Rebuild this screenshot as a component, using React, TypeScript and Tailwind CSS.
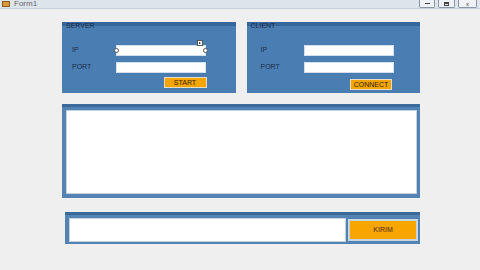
import React from "react";

const GroupBox = ({
  title,
  labelClass,
  buttonText,
  buttonClass,
  handles,
}: {
  title: string;
  labelClass: string;
  buttonText: string;
  buttonClass: string;
  handles?: boolean;
}) => {
  return (
    <div className="h-[71px] flex-1 bg-[#4a7eb3] border-t-[4px] border-[#35679a] flex flex-col">
      {/* group title sits over the top border */}
      <div className="-mt-[4px] h-[8px] pl-[4px] text-[7px] leading-[8px] text-[#1c2c48]">
        {title}
      </div>

      <div className="flex items-center mt-[15px]">
        <div className={labelClass}>IP</div>
        <div className="relative w-[90px] h-[11px] bg-white border border-[#d3dfeb]">
          {handles && (
            <>
              <div className="absolute -left-[3px] top-[2px] w-[5px] h-[5px] rounded-full bg-white border border-[#555]" />
              <div className="absolute -right-[3px] top-[2px] w-[5px] h-[5px] rounded-full bg-white border border-[#555]" />
              <div className="absolute right-[2px] -top-[6px] w-[6px] h-[6px] bg-white border border-[#555] flex items-center justify-center">
                <div className="w-0 h-0 border-y-[1.5px] border-y-transparent border-l-[2px] border-l-black" />
              </div>
            </>
          )}
        </div>
      </div>

      <div className="flex items-center mt-[6px]">
        <div className={labelClass}>PORT</div>
        <div className="w-[90px] h-[11px] bg-white border border-[#d3dfeb]" />
      </div>

      <div className={buttonClass}>{buttonText}</div>
    </div>
  );
};

export default function App() {
  return (
    <div className="w-[480px] h-[270px] bg-[#efefef] flex flex-col overflow-hidden font-['Liberation_Sans',Arial,sans-serif]">
      {/* title bar */}
      <div className="h-[9px] bg-[#dde4ec] border-b border-[#c9d2dc] flex items-start justify-between pl-[2px] pr-[3px] overflow-hidden">
        <div className="flex items-start gap-[4px] h-full">
          <div className="w-[8px] h-[6px] bg-[#d99a3a] border border-[#8a5a20] mt-[1px]" />
          <div className="text-[8px] leading-[8px] text-[#666]">Form1</div>
        </div>
        <div className="flex gap-[3px] h-full">
          <div className="w-[16px] h-[8px] border border-t-0 border-[#8a96a4] rounded-b-[2px] bg-[#eef2f6] flex items-center justify-center">
            <div className="w-[5px] h-[1px] bg-[#444]" />
          </div>
          <div className="w-[17px] h-[8px] border border-t-0 border-[#8a96a4] rounded-b-[2px] bg-[#eef2f6] flex items-center justify-center">
            <div className="w-[5px] h-[4px] border border-[#444] border-t-2" />
          </div>
          <div className="w-[19px] h-[8px] border border-t-0 border-[#8a96a4] rounded-b-[2px] bg-[#eef2f6] flex items-center justify-center text-[6px] leading-[6px] text-[#444]">
            x
          </div>
        </div>
      </div>

      <div className="flex-1 flex flex-col pl-[62px] pt-[13px]">
        <div className="flex gap-[11px] w-[358px]">
          <GroupBox
            title="SERVER"
            labelClass="w-[54px] shrink-0 pl-[10px] text-[7px] text-[#1c2c48]"
            buttonText="START"
            buttonClass="self-end mr-[29px] mt-[4px] w-[43px] h-[11px] bg-[#f6a500] border border-[#e6dcc4] text-[7px] leading-[9px] text-center text-[#2e2200]"
            handles
          />
          <GroupBox
            title="CLIENT"
            labelClass="w-[57px] shrink-0 pl-[14px] text-[7px] text-[#1c2c48]"
            buttonText="CONNECT"
            buttonClass="self-end mr-[28px] mt-[6px] w-[42px] h-[11px] bg-[#f6a500] border border-[#e6dcc4] text-[7px] leading-[9px] text-center text-[#2e2200]"
          />
        </div>

        {/* message area */}
        <div className="mt-[11px] w-[358px] h-[94px] bg-[#5283b3] border-t-[3px] border-[#3a6a99] pt-[3px] pl-[4px] pr-[3px] pb-[4px]">
          <div className="w-full h-full bg-white border border-[#c5d3e1]" />
        </div>

        {/* send row */}
        <div className="mt-[14px] ml-[3px] w-[355px] h-[32px] bg-[#5283b3] border-t-[3px] border-[#3a6a99] flex items-center gap-[2px] pl-[4px] pr-[2px] pt-[1px]">
          <div className="w-[277px] h-[24px] bg-white border border-[#c5d3e1]" />
          <div className="w-[70px] h-[22px] bg-[#f8a500] border-2 border-[#c8d6e4] flex items-center justify-center text-[7px] text-[#4a2800]">
            KIRIM
          </div>
        </div>
      </div>
    </div>
  );
}
